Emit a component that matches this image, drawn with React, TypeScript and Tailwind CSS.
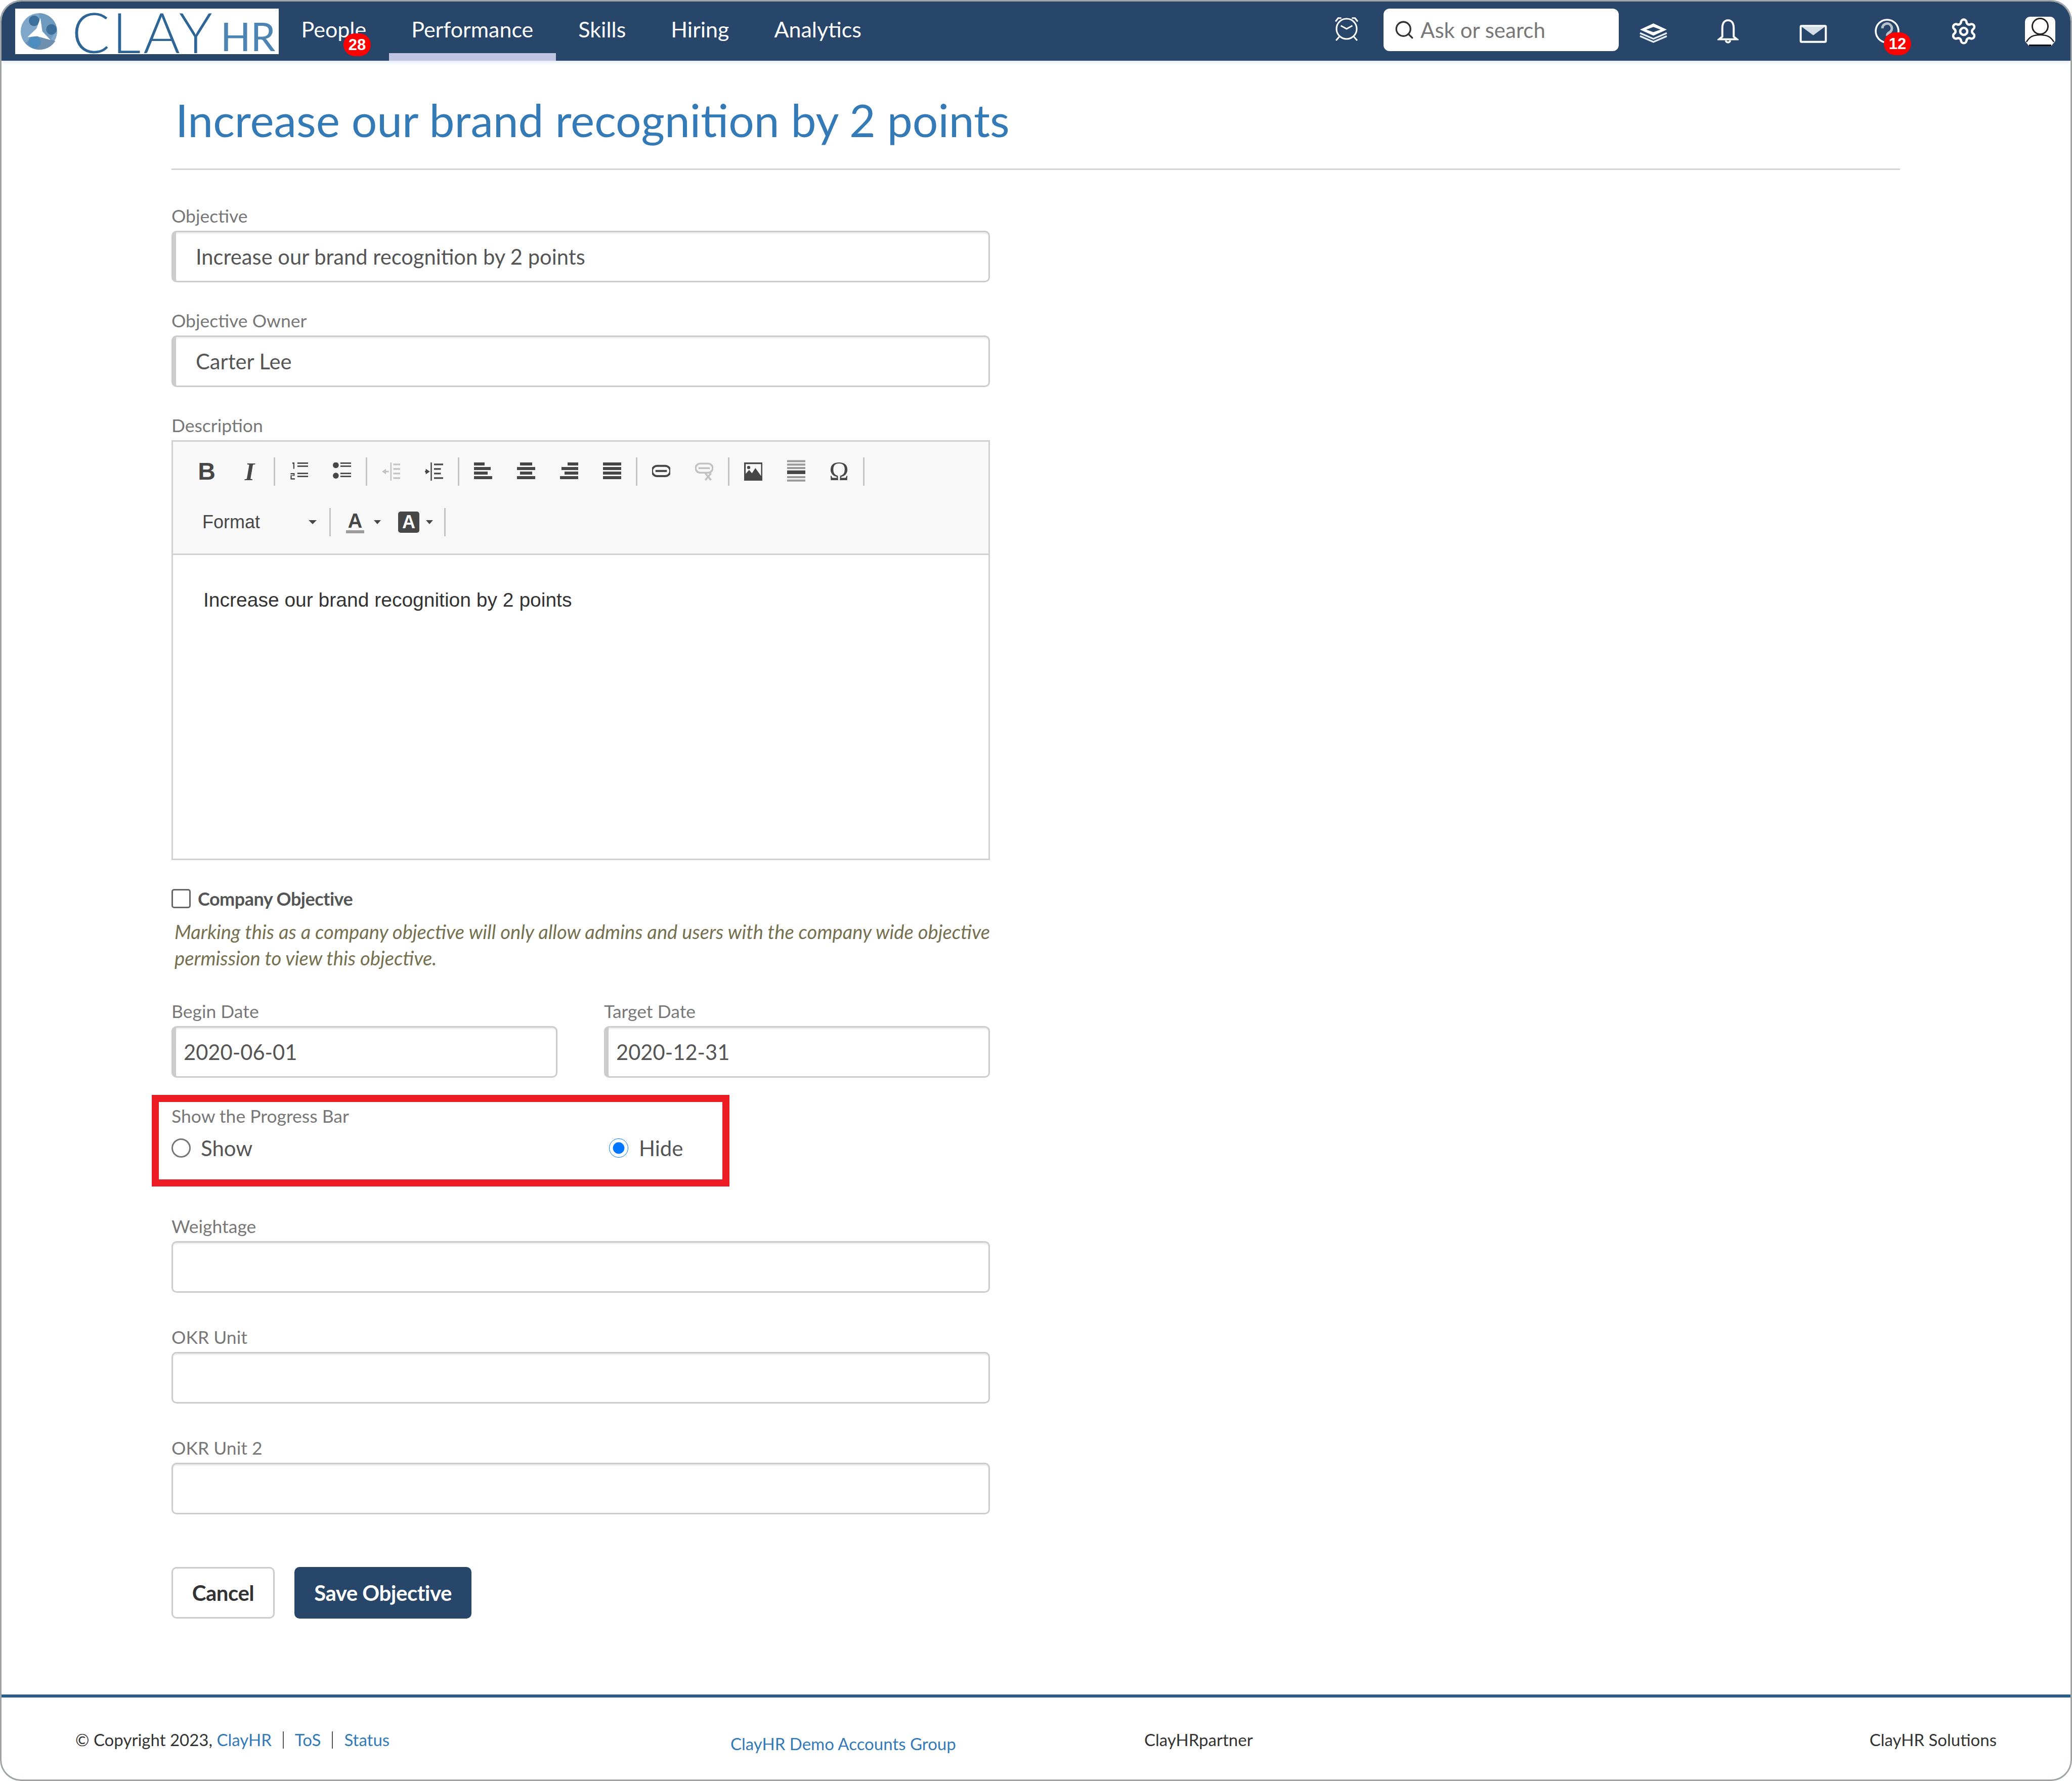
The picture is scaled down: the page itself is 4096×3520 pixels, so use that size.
import React from 'react';
import { Search, Settings } from 'lucide-react';

const lato = "font-['Lato','Noto_Sans',sans-serif]";

const navItems = ['People', 'Performance', 'Skills', 'Hiring', 'Analytics'];

const Badge: React.FC<{ text: string; className: string }> = ({ text, className }) => (
  <span className={`absolute w-[54px] h-[45px] rounded-full bg-[#ff0000] text-white text-[31px] leading-[45px] font-bold text-center font-['Liberation_Sans',sans-serif] ${className}`}>
    {text}
  </span>
);

const Logo = () => (
  <div className="w-[521px] h-[90px] ml-[27px] bg-white flex items-center relative shrink-0">
    <svg viewBox="0 0 80 84" className="w-[76px] h-[80px] ml-[9px] shrink-0">
      <circle cx="40" cy="42" r="38" fill="#7ea7c9" />
      <path d="M40 4a38 38 0 0 1 37 30L62 66 48 44 41 12Z" fill="#6d9abd" />
      <path d="M12 66a38 38 0 0 0 62-4L60 58 44 55 26 56Z" fill="#6f8fae" />
      <circle cx="30" cy="20" r="11" fill="#3d6f9c" />
      <circle cx="66" cy="38" r="11" fill="#3d6f9c" />
      <circle cx="31" cy="64" r="13" fill="#4d8dc0" />
      <path d="M43 14 47 42 64 60 36 52 16 54 35 36Z" fill="#fff" />
    </svg>
    <span className={`${lato} font-light text-[#2d6596] text-[111px] leading-[88px] ml-[27px] tracking-[5px]`}>CLAY</span>
    <span className={`${lato} font-normal text-[#4c84b3] text-[78px] leading-[60px] ml-[11px] mt-[18px]`}>HR</span>
  </div>
);

const HeaderIcons = () => (
  <div className="ml-auto flex items-center h-full">
    <div className="w-[80px] flex justify-center mb-[10px]">
      <svg viewBox="0 0 24 24" className="w-[50px] h-[50px]" fill="none" stroke="#fff" strokeWidth="1.5">
        <circle cx="12" cy="12" r="9.6" />
        <path d="M1.5 5 4 1.8h3M22.5 5 20 1.8h-3M2 23l3-3.4M22 23l-3-3.4M6.5 9l5.5 3 5.5-3" />
      </svg>
    </div>
    <div className="w-[465px] h-[84px] ml-[33px] mb-[5px] bg-white rounded-[12px] flex items-center pl-[20px]">
      <Search className="w-[42px] h-[42px] text-[#333] shrink-0" strokeWidth={1.9} />
      <span className={`${lato} text-[#777] text-[42px] ml-[11px]`}>Ask or search</span>
    </div>
    <div className="w-[136px] flex justify-center mt-[5px]">
      <svg viewBox="0 0 28 20" className="w-[57px] h-[41px]">
        <path d="M14 1 27 7 14 13 1 7Z" fill="#fff" />
        <path d="M14 4.5 21 7l-7 2.5L7 7Z" fill="#27466a" />
        <path d="M1 10.4 14 16l13-5.6M1 13.4 14 19l13-5.6" fill="none" stroke="#e6edf4" strokeWidth="1.7" />
      </svg>
    </div>
    <div className="w-[160px] flex justify-center">
      <svg viewBox="0 0 20 24" className="w-[42px] h-[50px]" fill="none" stroke="#fff" strokeWidth="1.9">
        <path d="M10 1.5C6 1.5 4.6 5 4.6 9v8L1.5 19.5h17L15.4 17V9c0-4-1.4-7.5-5.4-7.5Z" />
        <path d="M8 20.5a2 2 0 0 0 4 0" />
      </svg>
    </div>
    <div className="w-[176px] flex justify-center mt-[10px]">
      <svg viewBox="0 0 30 20" className="w-[57px] h-[36px]" fill="none">
        <rect x="1.2" y="1.2" width="27.6" height="17.6" rx="1" stroke="#fff" strokeWidth="2.2" />
        <path d="M2 2h26l-13 9.5Z" fill="#d5dee8" />
        <path d="M3 4.5 15 13 27 4.5" stroke="#27466a" strokeWidth="1" />
      </svg>
    </div>
    <div className="w-[116px] flex justify-center relative">
      <svg viewBox="0 0 24 24" className="w-[51px] h-[51px]" fill="none">
        <circle cx="12" cy="12" r="10.6" stroke="#fff" strokeWidth="1.7" />
        <path d="M7.6 9.4a4.4 4.4 0 1 1 6.6 3.8c-1.4.8-2.2 1.6-2.2 3.2" stroke="#b7c1cc" strokeWidth="2.4" />
      </svg>
      <Badge text="12" className="left-[52px] top-[28px]" />
    </div>
    <div className="w-[188px] flex justify-center">
      <Settings className="w-[56px] h-[56px] text-white" strokeWidth={2} />
    </div>
    <div className="w-[114px] flex justify-center mr-[3px]">
      <svg viewBox="0 0 60 58" className="w-[60px] h-[58px]">
        <path d="M10 0h40a10 10 0 0 1 10 10v38l-8 10H8L0 48V10A10 10 0 0 1 10 0Z" fill="#fff" />
        <circle cx="30" cy="19" r="15.5" fill="#fff" stroke="#222" strokeWidth="3" />
        <path d="M3 50c6-11 14-14 27-14s21 3 27 14" fill="#fff" stroke="#222" strokeWidth="2.6" />
        <path d="M8 56.5h44" stroke="#111" strokeWidth="3" />
      </svg>
    </div>
  </div>
);

const Header = () => (
  <header className="h-[117px] bg-[#27466a] flex items-center shrink-0 relative z-10 shadow-[0_4px_6px_#e4ecf6]">
    <Logo />
    <nav className="flex h-full">
      {navItems.map((item) => (
        <div
          key={item}
          className={`relative h-full flex items-start pt-[30px] px-[44.5px] border-b-[15px] ${item === 'Performance' ? 'border-[#c0c4e0]' : 'border-transparent'}`}
        >
          <span className={`${lato} text-white text-[43px] leading-[50px]`}>{item}</span>
          {item === 'People' && <Badge text="28" className="left-[128px] top-[63px]" />}
        </div>
      ))}
    </nav>
    <HeaderIcons />
  </header>
);

const Label: React.FC<{ children: React.ReactNode }> = ({ children }) => (
  <div className={`${lato} text-[#777] text-[35.5px] leading-[40px] mb-[9px]`}>{children}</div>
);

const Field: React.FC<{ label: string; value?: string; bar?: boolean; pad?: 'wide' | 'narrow'; className?: string }> = ({
  label,
  value = '',
  bar = true,
  pad = 'wide',
  className = '',
}) => (
  <div className={className}>
    <Label>{label}</Label>
    <input
      readOnly
      value={value}
      className={`${lato} block w-full h-[102px] rounded-[10px] border-[3px] border-[#cccccc] shadow-[inset_0_3px_2px_#eeeeee] text-[#555] text-[41.7px] outline-none ${bar ? 'border-l-[9px]' : ''} ${pad === 'wide' ? 'pl-[39px]' : 'pl-[15px]'}`}
    />
  </div>
);

const Sep = () => <span className="w-[3px] h-[56px] mx-[4.5px] bg-[#c4c4c4] shrink-0" />;

const Btn: React.FC<{ children: React.ReactNode }> = ({ children }) => (
  <span className="w-[85px] h-[84px] flex items-center justify-center shrink-0">{children}</span>
);

const Ico: React.FC<{ children: React.ReactNode; faded?: boolean }> = ({ children, faded }) => (
  <svg viewBox="0 0 16 16" className={`w-[36px] h-[36px] ${faded ? 'opacity-30' : ''}`} fill="#474747">
    {children}
  </svg>
);

const Bars: React.FC<{ widths: number[]; align: 'l' | 'c' | 'r' }> = ({ widths, align }) => (
  <Ico>
    {widths.map((w, i) => (
      <rect
        key={i}
        x={align === 'l' ? 0 : align === 'c' ? (16 - w) / 2 : 16 - w}
        y={i * 4}
        width={w}
        height={2.67}
      />
    ))}
  </Ico>
);

const Toolbar = () => (
  <div className="h-[224px] bg-[#f8f8f8] border-b-[3px] border-[#d1d1d1] pt-[17px] pl-[24px] shrink-0">
    <div className="flex items-center h-[84px]">
      <Btn>
        <span className="font-['Liberation_Sans',sans-serif] font-bold text-[#474747] text-[48px] leading-none">B</span>
      </Btn>
      <Btn>
        <span className="font-['Liberation_Serif',serif] font-bold italic text-[#474747] text-[50px] leading-none">I</span>
      </Btn>
      <Sep />
      <Btn>
        <Ico>
          <path d="M2.2 0H4v5.6H3V1.2H2.2ZM.6 9.3h3.6v2.5H1.6v2.1h2.8V15H.6v-3.8h2.6v-.8H.6Z" />
          <path d="M6.6 0h9.4v1.2H6.6ZM6.6 2.7h9.4v1.2H6.6ZM6.6 9h9.4v1.2H6.6ZM6.6 11.7h9.4v1.2H6.6Z" />
        </Ico>
      </Btn>
      <Btn>
        <Ico>
          <circle cx="2.6" cy="2.4" r="2.6" />
          <circle cx="2.6" cy="11.6" r="2.6" />
          <path d="M6.6 0h9.4v1.2H6.6ZM6.6 2.7h9.4v1.2H6.6ZM6.6 9h9.4v1.2H6.6ZM6.6 11.7h9.4v1.2H6.6Z" />
        </Ico>
      </Btn>
      <Sep />
      <Btn>
        <Ico faded>
          <path d="M7.4 0h1.1v16H7.4ZM0 8l3.6-2.4v1.7H6v1.4H3.6v1.7ZM10 1h6v1.4h-6ZM10 5h6v1.4h-6ZM10 9h6v1.4h-6ZM10 13h6v1.4h-6Z" />
        </Ico>
      </Btn>
      <Btn>
        <Ico>
          <path d="M5 0h1.1v16H5ZM4.3 8 .7 5.6v1.7H0v1.4h.7v1.7ZM8 1h8v1.4H8ZM8 5h6v1.4H8ZM8 9h6v1.4H8ZM8 13h8v1.4H8Z" />
        </Ico>
      </Btn>
      <Sep />
      <Btn><Bars align="l" widths={[9.3, 14.7, 12, 16]} /></Btn>
      <Btn><Bars align="c" widths={[10.7, 16, 10.7, 16]} /></Btn>
      <Btn><Bars align="r" widths={[9.3, 14.7, 12, 16]} /></Btn>
      <Btn><Bars align="l" widths={[16, 16, 16, 16]} /></Btn>
      <Sep />
      <Btn>
        <Ico>
          <path d="M4.5 3h7a4.5 4.5 0 0 1 0 9h-7a4.5 4.5 0 0 1 0-9Z" fill="none" stroke="#474747" strokeWidth="1.7" />
          <path d="M3 6.6h10v1.8H3Z" />
        </Ico>
      </Btn>
      <Btn>
        <Ico faded>
          <path d="M4.5 1h7a4 4 0 0 1 0 8h-7a4 4 0 0 1 0-8Z" fill="none" stroke="#474747" strokeWidth="1.6" />
          <path d="M3 4.2h10v1.6H3Z" />
          <path d="m9 9.5 5 6M14 9.5l-5 6" stroke="#474747" strokeWidth="1.7" />
        </Ico>
      </Btn>
      <Sep />
      <Btn>
        <Ico>
          <path d="M0 0h16v16H0Zm1.4 1.4V10l3-3.5 2.5 3 3-4.6 5 7V1.4ZM4 3a1.4 1.4 0 1 1 0 2.8A1.4 1.4 0 0 1 4 3Z" fillRule="evenodd" />
        </Ico>
      </Btn>
      <Btn>
        <svg viewBox="0 0 16 20" className="w-[36px] h-[46px]">
          <path d="M0 0h16v1.8H0ZM0 3h16v1.8H0ZM0 6h16v1.8H0ZM0 14h16v1.8H0ZM0 17h16v1.8H0Z" fill="#9a9a9a" />
          <rect x="0" y="9" width="16" height="3.2" fill="#474747" />
        </svg>
      </Btn>
      <Btn>
        <span className="font-['Liberation_Serif',serif] text-[#474747] text-[52px] leading-none">Ω</span>
      </Btn>
      <Sep />
    </div>
    <div className="flex items-center h-[84px] mt-[16px] -ml-[2px]">
      <span className="font-['Liberation_Sans',sans-serif] text-[#474747] text-[36px] w-[246px] pl-[36px] shrink-0">Format</span>
      <span className="w-0 h-0 border-x-[8px] border-t-[8px] border-x-transparent border-t-[#474747] shrink-0" />
      <span className="w-[3px] h-[56px] ml-[25px] bg-[#c4c4c4] shrink-0" />
      <span className="ml-[28px] w-[40px] flex flex-col items-center shrink-0">
        <span className="font-['Liberation_Sans',sans-serif] font-bold text-[#474747] text-[40px] leading-[38px]">A</span>
        <span className="w-[36px] h-[6px] bg-[#9c9c9c]" />
      </span>
      <span className="ml-[17px] w-0 h-0 border-x-[7px] border-t-[8px] border-x-transparent border-t-[#474747] shrink-0" />
      <span className="ml-[34px] w-[42px] h-[42px] rounded-[5px] bg-[#474747] text-white font-bold text-center text-[36px] leading-[42px] font-['Liberation_Sans',sans-serif] shrink-0">A</span>
      <span className="ml-[13px] w-0 h-0 border-x-[7px] border-t-[8px] border-x-transparent border-t-[#474747] shrink-0" />
      <span className="w-[3px] h-[56px] ml-[22px] bg-[#c4c4c4] shrink-0" />
    </div>
  </div>
);

const Form = () => (
  <div className="w-[1618px]">
    <Field label="Objective" value="Increase our brand recognition by 2 points" />
    <Field label="Objective Owner" value="Carter Lee" className="mt-[56px]" />

    <div className="mt-[56px]">
      <Label>Description</Label>
      <div className="h-[830px] border-[3px] border-[#d1d1d1] flex flex-col">
        <Toolbar />
        <div className="pt-[64px] pl-[60px] font-['Liberation_Sans',sans-serif] text-[#333] text-[39px] leading-[50px]">
          Increase our brand recognition by 2 points
        </div>
      </div>
    </div>

    <label className="flex items-center mt-[56px]">
      <input type="checkbox" className="appearance-none w-[38px] h-[38px] m-0 shrink-0 rounded-[5px] border-[3px] border-[#666] bg-white" />
      <span className={`${lato} font-bold text-[#555] text-[36px] tracking-[-0.5px] ml-[14px] leading-[40px]`}>Company Objective</span>
    </label>
    <p className={`${lato} italic text-[#75704f] text-[38.2px] leading-[52px] mt-[19px] pl-[6px] whitespace-nowrap`}>
      Marking this as a company objective will only allow admins and users with the company wide objective
      <br />
      permission to view this objective.
    </p>

    <div className="flex justify-between mt-[60px]">
      <Field label="Begin Date" value="2020-06-01" pad="narrow" className="w-[763px]" />
      <Field label="Target Date" value="2020-12-31" pad="narrow" className="w-[763px]" />
    </div>

    <div className="-ml-[39px] w-[1142px] h-[181px] mt-[34px] border-[14px] border-[#ed1c24] pl-[25px] pt-[8px]">
      <div className={`${lato} text-[#777] text-[35.5px] leading-[40px]`}>Show the Progress Bar</div>
      <div className="flex items-center mt-[18px]">
        <label className="flex items-center w-[865px]">
          <input type="radio" name="progress" className="appearance-none w-[38px] h-[38px] m-0 shrink-0 rounded-full border-[3px] border-[#767676] bg-white" />
          <span className={`${lato} text-[#555] text-[42px] ml-[20px] leading-[50px]`}>Show</span>
        </label>
        <label className="flex items-center">
          <input type="radio" name="progress" defaultChecked className="w-[38px] h-[38px] m-0 shrink-0" />
          <span className={`${lato} text-[#555] text-[42px] ml-[21px] leading-[50px]`}>Hide</span>
        </label>
      </div>
    </div>

    <Field label="Weightage" bar={false} className="mt-[59px]" />
    <Field label="OKR Unit" bar={false} className="mt-[68px]" />
    <Field label="OKR Unit 2" bar={false} className="mt-[68px]" />

    <div className="flex mt-[104px]">
      <button className={`${lato} w-[204px] h-[102px] rounded-[10px] border-[3px] border-[#cccccc] bg-white font-bold text-[#333] text-[42px] tracking-[-0.5px]`}>
        Cancel
      </button>
      <button className={`${lato} w-[350px] h-[102px] ml-[39px] rounded-[10px] bg-[#27466a] font-bold text-white text-[42px] tracking-[-0.5px]`}>
        Save Objective
      </button>
    </div>
  </div>
);

const Footer = () => (
  <footer className={`${lato} h-[168px] border-t-[6px] border-[#2a5d8c] flex text-[#333] text-[33px] shrink-0 pl-[146px] pr-[146px] pt-[61px]`}>
    <div className="w-[1295px] leading-[44px] flex">
      <span>© Copyright 2023,&nbsp;</span>
      <span className="text-[#337ab7]">ClayHR</span>
      <span className="w-[2px] h-[34px] mt-[6px] mx-[22px] bg-[#555]" />
      <span className="text-[#337ab7]">ToS</span>
      <span className="w-[2px] h-[34px] mt-[6px] mx-[22px] bg-[#555]" />
      <span className="text-[#337ab7]">Status</span>
    </div>
    <div className="w-[818px] leading-[44px] pt-[8px] text-[#337ab7]">ClayHR Demo Accounts Group</div>
    <div className="flex-1 leading-[44px]">ClayHRpartner</div>
    <div className="leading-[44px]">ClayHR Solutions</div>
  </footer>
);

export default function App() {
  return (
    <div className="w-[4096px] h-[3520px] border-[3px] border-[#9fa3a5] rounded-[42px] overflow-hidden flex flex-col bg-white">
      <Header />
      <main className="flex-1 pl-[336px]">
        <h1 className={`${lato} text-[#337ab7] text-[89.3px] leading-[110px] pl-[8px] pt-[62px]`}>
          Increase our brand recognition by 2 points
        </h1>
        <div className="w-[3417px] h-[3px] bg-[#d5d5d5] mt-[41px] mb-[71px]" />
        <Form />
      </main>
      <Footer />
    </div>
  );
}
